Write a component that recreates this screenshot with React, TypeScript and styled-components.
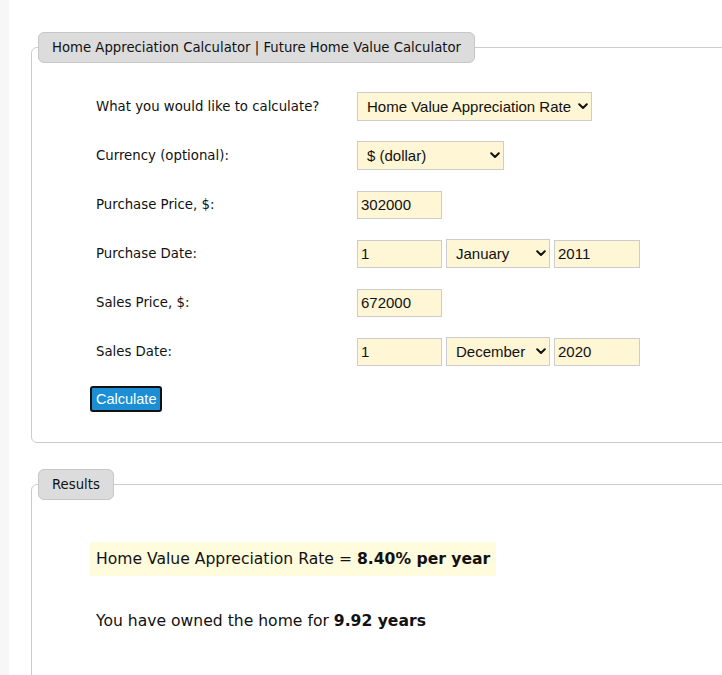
import React from "react";
import styled, { createGlobalStyle } from "styled-components";

const GlobalStyle = createGlobalStyle`
  html, body { margin: 0; padding: 0; background: #ffffff; }
  body {
    font-family: "DejaVu Sans", Verdana, sans-serif;
    font-size: 13.3px;
    color: #111111;
  }
  #root { min-height: 675px; }
`;

const Page = styled.div`
  display: flex;
  min-height: 675px;
  overflow: hidden;
`;

const SideStrip = styled.div`
  width: 9px;
  flex: 0 0 9px;
  background: #f7f7f7;
`;

const Main = styled.main`
  flex: 1;
  padding: 32px 0 0 22px;
  display: flex;
  flex-direction: column;
  gap: 26px;
`;

const Fieldset = styled.fieldset<{ $bottom?: number }>`
  margin: 0;
  width: 720px;
  border: 1px solid #cccccc;
  border-radius: 6px;
  padding: 0 0 ${(p) => p.$bottom ?? 29}px 58px;
  min-width: 0;
`;

const Legend = styled.legend`
  margin-left: -52px;
  height: 31px;
  box-sizing: border-box;
  padding: 0 13px;
  display: flex;
  align-items: center;
  background: #dcdcdc;
  border: 1px solid #c6c6c6;
  border-radius: 6px;
  font-size: 13.25px;
  color: #111111;
`;

const Form = styled.div`
  display: flex;
  flex-direction: column;
  gap: 20px;
  padding-top: 29px;
`;

const Row = styled.div`
  display: flex;
  align-items: center;
  height: 29px;
`;

const Label = styled.div`
  width: 261px;
  padding-left: 6px;
  flex: 0 0 261px;
  font-size: 13.3px;
`;

const Controls = styled.div`
  display: flex;
  align-items: center;
  gap: 4px;
`;

const SelectWrap = styled.div<{ $w: number }>`
  position: relative;
  width: ${(p) => p.$w}px;
  height: 29px;
`;

const Select = styled.select`
  appearance: none;
  -webkit-appearance: none;
  width: 100%;
  height: 29px;
  box-sizing: border-box;
  background-color: #fff6d5;
  border: 1px solid #cccccc;
  border-radius: 0;
  font-family: "Liberation Sans", Arial, sans-serif;
  font-size: 15px;
  color: #111111;
  padding: 0 18px 0 9px;
  outline: none;
`;

const Chevron = styled.svg`
  position: absolute;
  right: 4px;
  top: 11px;
  width: 10px;
  height: 7px;
  pointer-events: none;
`;

const Input = styled.input<{ $w: number }>`
  width: ${(p) => p.$w}px;
  height: 28px;
  box-sizing: border-box;
  background: #fff6d5;
  border: 1px solid #cccccc;
  border-radius: 0;
  font-family: "Liberation Sans", Arial, sans-serif;
  font-size: 15px;
  color: #111111;
  padding: 0 3px;
  outline: none;
`;

const Button = styled.button`
  align-self: flex-start;
  height: 26px;
  box-sizing: border-box;
  padding: 0 4px;
  background: #1a8fd6;
  color: #ffffff;
  border: 2px solid #111111;
  border-radius: 3px;
  font-family: "Liberation Sans", Arial, sans-serif;
  font-size: 14.5px;
`;

const ResultsBody = styled.div`
  padding-top: 42px;
  display: flex;
  flex-direction: column;
  align-items: flex-start;
  gap: 28px;
  min-height: 200px;
`;

const Highlight = styled.div`
  background: #fffbdd;
  height: 34px;
  display: flex;
  align-items: center;
  padding: 0 6px;
  font-size: 15.6px;
`;

const Plain = styled.div`
  padding: 0 6px;
  font-size: 15.6px;
  line-height: 34px;
`;

const months = [
  "January", "February", "March", "April", "May", "June",
  "July", "August", "September", "October", "November", "December",
];

function Dropdown({
  width,
  value,
  options,
}: {
  width: number;
  value: string;
  options: { value: string; label: string }[];
}) {
  return (
    <SelectWrap $w={width}>
      <Select defaultValue={value}>
        {options.map((o) => (
          <option key={o.value} value={o.value}>
            {o.label}
          </option>
        ))}
      </Select>
      <Chevron viewBox="0 0 10 7">
        <polyline
          points="1.2,1.2 5,5 8.8,1.2"
          fill="none"
          stroke="#111111"
          strokeWidth="2"
          strokeLinecap="round"
          strokeLinejoin="round"
        />
      </Chevron>
    </SelectWrap>
  );
}

const monthOptions = months.map((m) => ({ value: m, label: m }));

export default function App() {
  return (
    <>
      <GlobalStyle />
      <Page>
        <SideStrip />
        <Main>
          <Fieldset $bottom={30}>
            <Legend>Home Appreciation Calculator | Future Home Value Calculator</Legend>
            <Form>
              <Row>
                <Label>What you would like to calculate?</Label>
                <Controls>
                  <Dropdown
                    width={235}
                    value="rate"
                    options={[
                      { value: "rate", label: "Home Value Appreciation Rate" },
                      { value: "future", label: "Future Home Value" },
                    ]}
                  />
                </Controls>
              </Row>
              <Row>
                <Label>Currency (optional):</Label>
                <Controls>
                  <Dropdown
                    width={147}
                    value="usd"
                    options={[
                      { value: "usd", label: "$ (dollar)" },
                      { value: "eur", label: "€ (euro)" },
                    ]}
                  />
                </Controls>
              </Row>
              <Row>
                <Label>Purchase Price, $:</Label>
                <Controls>
                  <Input $w={85} defaultValue="302000" />
                </Controls>
              </Row>
              <Row>
                <Label>Purchase Date:</Label>
                <Controls>
                  <Input $w={85} defaultValue="1" />
                  <Dropdown width={104} value="January" options={monthOptions} />
                  <Input $w={86} defaultValue="2011" />
                </Controls>
              </Row>
              <Row>
                <Label>Sales Price, $:</Label>
                <Controls>
                  <Input $w={85} defaultValue="672000" />
                </Controls>
              </Row>
              <Row>
                <Label>Sales Date:</Label>
                <Controls>
                  <Input $w={85} defaultValue="1" />
                  <Dropdown width={104} value="December" options={monthOptions} />
                  <Input $w={86} defaultValue="2020" />
                </Controls>
              </Row>
              <Button type="button">Calculate</Button>
            </Form>
          </Fieldset>
          <Fieldset $bottom={40}>
            <Legend>Results</Legend>
            <ResultsBody>
              <Highlight>
                Home Value Appreciation Rate =&nbsp;<b>8.40% per year</b>
              </Highlight>
              <Plain>
                You have owned the home for <b>9.92 years</b>
              </Plain>
            </ResultsBody>
          </Fieldset>
        </Main>
      </Page>
    </>
  );
}
